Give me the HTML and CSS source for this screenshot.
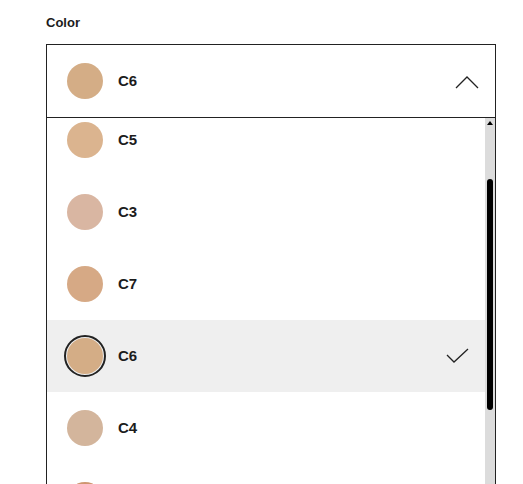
FILE: index.html
```html
<!DOCTYPE html>
<html>
<head>
<meta charset="utf-8">
<link rel="stylesheet" href="styles.css">
</head>
<body>
<div class="field">
  <div class="label">Color</div>
  <div class="select">
    <span class="swatch" style="background:#d4ad86"></span>
    <span class="name">C6</span>
    <svg class="chevron" width="24" height="14" viewBox="0 0 24 14"><path d="M1 13 L12 2 L23 13" fill="none" stroke="#222" stroke-width="1.3"/></svg>
  </div>
  <div class="panel">
    <div class="viewport">
      <ul class="list">
        <li class="row"><span class="swatch" style="background:#dbb48f"></span><span class="name">C5</span></li>
        <li class="row"><span class="swatch" style="background:#d9b6a2"></span><span class="name">C3</span></li>
        <li class="row"><span class="swatch" style="background:#d6a985"></span><span class="name">C7</span></li>
        <li class="row selected"><span class="swatch" style="background:#d4ad86"></span><span class="name">C6</span>
          <svg class="check" width="24" height="16" viewBox="0 0 24 16"><path d="M1 7 L8 14 L22 1" fill="none" stroke="#222" stroke-width="1.3"/></svg>
        </li>
        <li class="row"><span class="swatch" style="background:#d3b59c"></span><span class="name">C4</span></li>
        <li class="row"><span class="swatch" style="background:#cf9670"></span></li>
      </ul>
    </div>
    <div class="track">
      <span class="arrow"></span>
      <span class="thumb"></span>
    </div>
  </div>
</div>
</body>
</html>
```
FILE: styles.css
```css
html, body {
  margin: 0;
  padding: 0;
  background: #fff;
  height: 484px;
  overflow: hidden;
}
body {
  font-family: "Liberation Sans", Arial, sans-serif;
  color: #1c1c1c;
}
.field {
  padding: 15px 0 0 46px;
  width: 450px;
}
.label {
  font-size: 13px;
  font-weight: bold;
  line-height: 16px;
  margin-bottom: 13px;
}
.select {
  box-sizing: border-box;
  height: 74px;
  border: 1px solid #222;
  display: flex;
  align-items: center;
  padding: 0 16px 0 20px;
}
.swatch {
  width: 36px;
  height: 36px;
  border-radius: 50%;
  flex: none;
}
.name {
  font-size: 15px;
  font-weight: bold;
  line-height: 18px;
  margin-left: 15px;
  margin-bottom: 1px;
  flex: 1;
}
.chevron {
  flex: none;
  margin-top: 1px;
}
.panel {
  display: flex;
  border-left: 1px solid #222;
  border-right: 1px solid #222;
  height: 366px;
}
.viewport {
  flex: 1;
  overflow: hidden;
}
.list {
  list-style: none;
  margin: -14px 0 0 0;
  padding: 0;
}
.row {
  height: 72px;
  display: flex;
  align-items: center;
  padding: 0 15px 0 20px;
}
.row.selected {
  background: #efefef;
}
.row.selected .swatch {
  outline: 2px solid #222;
  outline-offset: 1px;
}
.check {
  flex: none;
}
.track {
  width: 10px;
  background: #dcdcdc;
  display: flex;
  flex-direction: column;
  align-items: center;
}
.arrow {
  margin-top: 3px;
  width: 0;
  height: 0;
  border-left: 3px solid transparent;
  border-right: 3px solid transparent;
  border-bottom: 4px solid #000;
}
.thumb {
  margin-top: 54px;
  width: 6px;
  height: 231px;
  background: #000;
  border-radius: 3px;
}
```
